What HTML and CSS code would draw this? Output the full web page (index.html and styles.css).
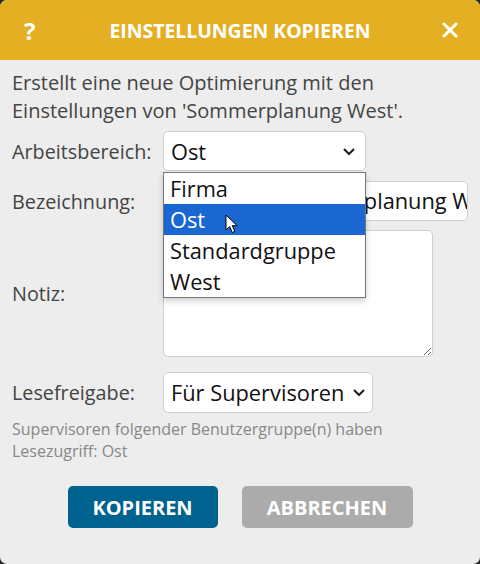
FILE: index.html
```html
<!DOCTYPE html>
<html lang="de">
<head>
<meta charset="utf-8">
<title>Einstellungen kopieren</title>
<link rel="stylesheet" href="styles.css">
</head>
<body>
<div class="dialog">
  <div class="header">
    <span class="help">?</span>
    <span class="title">EINSTELLUNGEN KOPIEREN</span>
    <svg class="close" width="16" height="16" viewBox="0 0 16 16"><path d="M2 2 L14 14 M14 2 L2 14" stroke="#fff" stroke-width="3" stroke-linecap="round"/></svg>
  </div>
  <div class="content">
    <p class="intro">Erstellt eine neue Optimierung mit den Einstellungen von 'Sommerplanung West'.</p>
    <div class="row row-area">
      <span class="label">Arbeitsbereich:</span>
      <div class="field-wrap">
        <div class="select select-area">
          <span>Ost</span>
          <svg class="chev" width="14" height="9" viewBox="0 0 14 9"><path d="M2 2 L7 7 L12 2" fill="none" stroke="#222" stroke-width="2.2"/></svg>
        </div>
        <ul class="dropdown">
          <li>Firma</li>
          <li class="active">Ost
            <svg class="cursor" width="15" height="21" viewBox="0 0 15 21"><path d="M1 1 L1 16 L4.7 12.6 L7.3 18.5 L9.8 17.4 L7.3 11.7 L12.2 11.7 Z" fill="#fff" stroke="#000" stroke-width="1" stroke-linejoin="round"/></svg>
          </li>
          <li>Standardgruppe</li>
          <li>West</li>
        </ul>
      </div>
    </div>
    <div class="row row-name">
      <span class="label">Bezeichnung:</span>
      <div class="input">Kopie von Sommerplanung West</div>
    </div>
    <div class="row row-note">
      <span class="label">Notiz:</span>
      <textarea class="textarea"></textarea>
    </div>
    <div class="row row-share">
      <span class="label">Lesefreigabe:</span>
      <div class="select select-share">
        <span>Für Supervisoren</span>
        <svg class="chev" width="14" height="9" viewBox="0 0 14 9"><path d="M2 2 L7 7 L12 2" fill="none" stroke="#222" stroke-width="2.2"/></svg>
      </div>
    </div>
    <p class="hint">Supervisoren folgender Benutzergruppe(n) haben Lesezugriff: Ost</p>
    <div class="buttons">
      <button class="btn btn-primary">KOPIEREN</button>
      <button class="btn btn-secondary">ABBRECHEN</button>
    </div>
  </div>
</div>
</body>
</html>
```
FILE: styles.css
```css
* { box-sizing: border-box; }
html, body {
  margin: 0;
  padding: 0;
  background: #2a2a2a;
}
body {
  font-family: "Open Sans", "Noto Sans", sans-serif;
}
.dialog {
  width: 480px;
  height: 564px;
  background: #ededed;
  border-radius: 7px;
  overflow: hidden;
  display: flex;
  flex-direction: column;
}
.header {
  height: 60px;
  background: #e5af24;
  color: #fff;
  display: flex;
  align-items: center;
  padding: 0 22px 0 24px;
  flex-shrink: 0;
}
.help {
  font-weight: 700;
  font-size: 24px;
  width: 14px;
}
.title {
  flex: 1;
  text-align: center;
  font-weight: 700;
  font-size: 19.4px;
}
.close { display: block; }
.content {
  padding: 9px 12px 0 12px;
  color: #444;
}
.intro {
  margin: 0;
  font-size: 20px;
  line-height: 28px;
  width: 420px;
}
.row {
  display: flex;
  align-items: center;
}
.label {
  width: 151px;
  flex-shrink: 0;
  font-size: 19.8px;
  color: #444;
}
.row-area { margin-top: 6px; }
.row-name { margin-top: 10px; }
.row-note { margin-top: 9px; }
.row-share { margin-top: 15px; }
.field-wrap { position: relative; }
.select {
  height: 40px;
  background: #fff;
  border: 1px solid #cfcfcf;
  border-radius: 5px;
  display: flex;
  align-items: center;
  justify-content: space-between;
  padding: 0 9px 0 7px;
  font-size: 21.8px;
  color: #111;
}
.select-area { width: 203px; }
.select-share { width: 210px; height: 41px; padding-right: 6px; }
.chev { display: block; }
.dropdown {
  position: absolute;
  left: 0;
  top: 41px;
  width: 203px;
  margin: 0;
  padding: 0;
  list-style: none;
  background: #fff;
  border: 1px solid #767676;
  box-shadow: 0 3px 6px rgba(0,0,0,0.2);
  z-index: 5;
}
.dropdown li {
  height: 31px;
  line-height: 31px;
  padding-left: 6px;
  font-size: 21.8px;
  color: #111;
  position: relative;
}
.dropdown li.active {
  background: #1a67d2;
  color: #fff;
}
.cursor {
  position: absolute;
  left: 61px;
  top: 10px;
}
.input {
  width: 314px;
  height: 40px;
  background: #fff;
  border: 1px solid #cfcfcf;
  border-radius: 5px;
  font-size: 21.8px;
  line-height: 38px;
  padding: 0 7px;
  white-space: nowrap;
  overflow: hidden;
  color: #111;
}
.textarea {
  width: 270px;
  height: 127px;
  background: #fff;
  border: 1px solid #cfcfcf;
  border-radius: 5px;
  margin: 0;
  font-family: inherit;
}
.hint {
  margin: 5px 0 0 0;
  font-size: 16px;
  line-height: 22px;
  color: #888;
}
.buttons {
  display: flex;
  justify-content: center;
  gap: 24px;
  margin-top: 24px;
}
.btn {
  height: 42px;
  border: none;
  border-radius: 5px;
  color: #fff;
  font-family: inherit;
  font-weight: 700;
  font-size: 20px;
}
.btn-primary { width: 150px; background: #00628f; }
.btn-secondary { width: 171px; background: #ababab; }
```
